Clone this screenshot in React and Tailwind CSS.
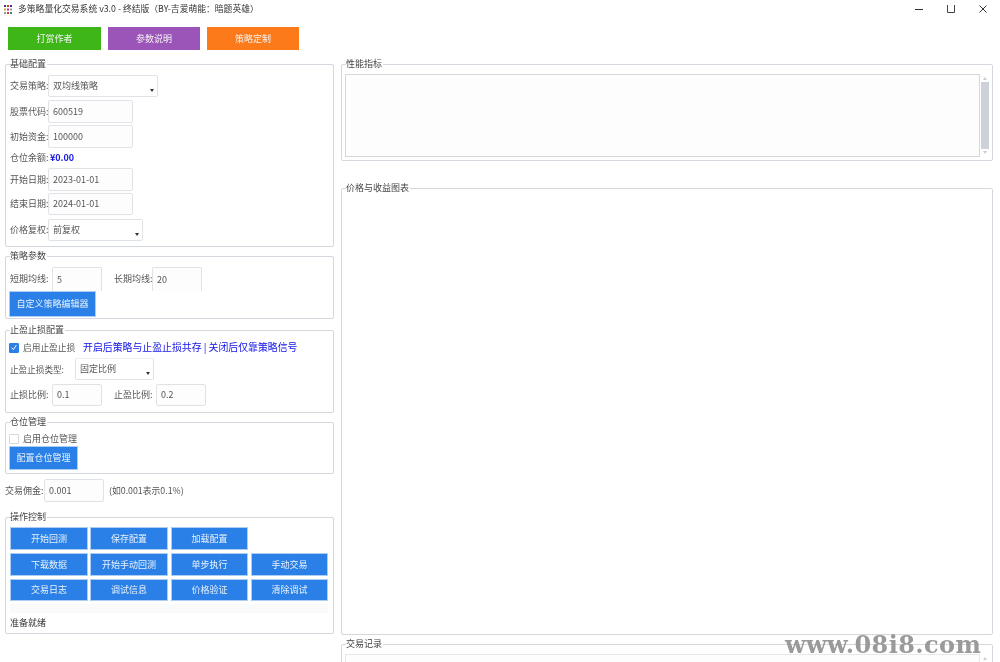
function Group({ title, className = "", children }) {
  return (
    <section className={`relative rounded-[2px] border border-[#d3d7de] ${className}`}>
      <span className="absolute left-[4px] top-[-7px] bg-white pr-[1px] text-[9px] leading-[12px] text-[#444]">{title}</span>
      {children}
    </section>
  );
}
function Field({ label, children, className = "" }) {
  return (
    <div className={`flex items-center ${className}`}>
      <span className="w-[38px] shrink-0 whitespace-nowrap text-[9px] text-[#555]">{label}</span>
      {children}
    </div>
  );
}
function Input({ value, className = "" }) {
  return (
    <div className={`flex items-center rounded-[2px] border border-[#dfe2e7] bg-[#fdfdfd] pl-[4px] text-[9px] text-[#555] ${className}`}>{value}</div>
  );
}
function Select({ value, className = "" }) {
  return (
    <div className={`relative flex items-center rounded-[2px] border border-[#dfe2e7] bg-white pl-[4px] text-[9px] text-[#555] ${className}`}>
      {value}
      <span className="absolute bottom-[4px] right-[3px] h-0 w-0 border-x-[2.5px] border-t-[3px] border-x-transparent border-t-[#333]" />
    </div>
  );
}
function Blue({ children, className = "" }) {
  return (
    <button className={`flex items-center justify-center border border-[#a9cdf3] bg-[#2a80e6] text-[9px] text-[#e8f1fc] ${className}`}>{children}</button>
  );
}
function Top({ children, className = "" }) {
  return (
    <button className={`flex h-[23px] items-center justify-center text-[9px] text-[#f3f3f3] ${className}`}>{children}</button>
  );
}
function Check({ on }) {
  return (
    <span className={`flex h-[10px] w-[10px] shrink-0 items-center justify-center rounded-[1px] border ${on ? "border-[#2a80e6] bg-[#2a80e6]" : "border-[#d5d8dc] bg-white"}`}>
      {on && (
        <svg viewBox="0 0 10 10" className="h-[9px] w-[9px]"><path d="M2 5.2 L4.2 7.6 L8 2" fill="none" stroke="#fff" strokeWidth="1.2" /></svg>
      )}
    </span>
  );
}
function Scrollbar({ className = "" }) {
  return (
    <div className={`flex w-[8px] shrink-0 flex-col items-center ${className}`}>
      <span className="mt-[3px] h-0 w-0 border-x-[2px] border-b-[3px] border-x-transparent border-b-[#ccc]" />
      <div className="mt-[2px] w-full flex-1 bg-[#cdd2da]" />
      <span className="mb-[3px] mt-[2px] h-0 w-0 border-x-[2px] border-t-[3px] border-x-transparent border-t-[#ccc]" />
    </div>
  );
}
export default function App() {
  return (
    <div className="relative h-[662px] w-[1000px] overflow-hidden bg-white text-[#444] blur-[0.35px] [font-family:'Noto_Sans_CJK_SC','Noto_Sans',sans-serif]">
      <header className="flex h-[18px] items-center">
        <svg viewBox="0 0 8 9" className="ml-[4px] h-[9px] w-[8px]">
          <rect x="0" y="0" width="2" height="2" fill="#3a3a8a" /><rect x="3" y="0" width="2" height="2" fill="#d33" />
          <rect x="6" y="0" width="2" height="2" fill="#3a3a8a" /><rect x="0" y="3.5" width="2" height="2" fill="#e8a020" />
          <rect x="3" y="3.5" width="2" height="2" fill="#b030b0" /><rect x="6" y="3.5" width="2" height="2" fill="#999" />
          <rect x="0" y="7" width="2" height="2" fill="#999" /><rect x="3" y="7" width="2" height="2" fill="#d33" />
          <rect x="6" y="7" width="2" height="2" fill="#3a8a6a" />
        </svg>
        <span className="ml-[6px] whitespace-nowrap text-[8.8px] text-[#333]">多策略量化交易系统 v3.0 - 终结版（BY-吉爱萌能：暗题英雄）</span>
        <div className="ml-auto mr-[13px] flex items-center gap-[24px]">
          <svg viewBox="0 0 8 8" className="h-[8px] w-[8px]"><path d="M0 4.5H8" stroke="#333" strokeWidth="1" /></svg>
          <svg viewBox="0 0 8 8" className="h-[8px] w-[8px]"><path d="M.5 0V7.5H7.5V0" fill="none" stroke="#444" strokeWidth="1" /></svg>
          <svg viewBox="0 0 8 8" className="h-[8px] w-[8px]"><path d="M.5 .5L7.5 7.5M7.5 .5L.5 7.5" stroke="#333" strokeWidth="1" /></svg>
        </div>
      </header>

      <div className="ml-[8px] mt-[9px] flex gap-[7px]">
        <Top className="w-[93px] bg-[#3fb618]">打赏作者</Top>
        <Top className="w-[92px] bg-[#9b54b8]">参数说明</Top>
        <Top className="w-[92px] bg-[#fd7a1a]">策略定制</Top>
      </div>

      <div className="ml-[5px] mt-[14px] flex items-start gap-[7px]">
        <div className="w-[329px] shrink-0">
          <Group title="基础配置" className="h-[183px] pl-[4px] pt-[10px]">
            <Field label="交易策略:"><Select value="双均线策略" className="h-[22px] w-[110px]" /></Field>
            <Field label="股票代码:" className="mt-[3px]"><Input value="600519" className="h-[23px] w-[85px]" /></Field>
            <Field label="初始资金:" className="mt-[2px]"><Input value="100000" className="h-[23px] w-[85px]" /></Field>
            <Field label="仓位余额:" className="h-[20px]"><span className="pl-[2px] text-[9px] font-bold text-[#1212e6]">¥0.00</span></Field>
            <Field label="开始日期:"><Input value="2023-01-01" className="h-[23px] w-[85px]" /></Field>
            <Field label="结束日期:" className="mt-[2px]"><Input value="2024-01-01" className="h-[22px] w-[85px]" /></Field>
            <Field label="价格复权:" className="mt-[4px]"><Select value="前复权" className="h-[22px] w-[95px]" /></Field>
          </Group>

          <Group title="策略参数" className="mt-[9px] h-[63px] pl-[4px] pt-[10px]">
            <div className="flex h-[24px] items-center">
              <span className="w-[42px] shrink-0 whitespace-nowrap text-[9px] text-[#555]">短期均线:</span>
              <Input value="5" className="h-full w-[50px] rounded-b-none border-b-0" />
              <span className="ml-[12px] w-[38px] shrink-0 whitespace-nowrap text-[9px] text-[#555]">长期均线:</span>
              <Input value="20" className="h-full w-[50px] rounded-b-none border-b-0" />
            </div>
            <Blue className="h-[26px] w-[87px] -translate-x-[1px]">自定义策略编辑器</Blue>
          </Group>

          <Group title="止盈止损配置" className="mt-[11px] h-[83px] pl-[3px] pt-[11px]">
            <div className="flex h-[11px] items-center">
              <Check on />
              <span className="ml-[4px] w-[60px] whitespace-nowrap text-[8.7px] text-[#555]">启用止盈止损</span>
              <span className="whitespace-nowrap text-[9.9px] text-[#1212e6]">开启后策略与止盈止损共存 | 关闭后仅靠策略信号</span>
            </div>
            <div className="mt-[5px] flex h-[22px] items-center pl-[1px]">
              <span className="w-[65px] shrink-0 whitespace-nowrap text-[8.6px] text-[#555]">止盈止损类型:</span>
              <Select value="固定比例" className="h-full w-[79px] border-t-[#eee]" />
            </div>
            <div className="mt-[4px] flex h-[22px] items-center pl-[1px]">
              <span className="w-[42px] shrink-0 whitespace-nowrap text-[9px] text-[#555]">止损比例:</span>
              <Input value="0.1" className="h-full w-[50px]" />
              <span className="ml-[12px] w-[42px] shrink-0 whitespace-nowrap text-[9px] text-[#555]">止盈比例:</span>
              <Input value="0.2" className="h-full w-[50px]" />
            </div>
          </Group>

          <Group title="仓位管理" className="mt-[9px] h-[52px] pl-[3px] pt-[10px]">
            <div className="flex h-[11px] items-center">
              <Check />
              <span className="ml-[4px] text-[9px] text-[#555]">启用仓位管理</span>
            </div>
            <Blue className="mt-[2px] h-[24px] w-[69px]">配置仓位管理</Blue>
          </Group>

          <div className="mt-[5px] flex h-[23px] items-center">
            <span className="w-[39px] shrink-0 whitespace-nowrap text-[9px] text-[#555]">交易佣金:</span>
            <Input value="0.001" className="h-full w-[60px]" />
            <span className="ml-[5px] text-[8.8px] text-[#555]">(如0.001表示0.1%)</span>
          </div>

          <Group title="操作控制" className="mt-[15px] h-[117px] pl-[4px] pt-[9px]">
            <div className="grid grid-cols-[78px_79px_78px_77px] grid-rows-[23px_23px_22px] gap-x-[2px] gap-y-[3px]">
              <Blue>开始回测</Blue>
              <Blue className="w-[78px]">保存配置</Blue>
              <Blue className="w-[77px]">加载配置</Blue>
              <span />
              <Blue>下载数据</Blue>
              <Blue className="w-[78px]">开始手动回测</Blue>
              <Blue className="w-[77px]">单步执行</Blue>
              <Blue>手动交易</Blue>
              <Blue>交易日志</Blue>
              <Blue className="w-[78px]">调试信息</Blue>
              <Blue className="w-[77px]">价格验证</Blue>
              <Blue>清除调试</Blue>
            </div>
            <div className="mt-[3px] h-[9px] w-[318px] bg-[#fafafa]" />
            <div className="mt-[3px] text-[9px] leading-[14px] text-[#333]">准备就绪</div>
          </Group>
        </div>

        <div className="w-[652px] shrink-0">
          <Group title="性能指标" className="flex h-[97px] pb-[3px] pl-[3px] pt-[9px]">
            <div className="h-full w-[635px] border border-[#d3d7de] bg-[#fdfdfd]" />
            <Scrollbar className="ml-[1px] h-full" />
          </Group>
          <Group title="价格与收益图表" className="mt-[27px] h-[447px]" />
          <Group title="交易记录" className="mt-[9px] flex h-[60px] pl-[3px] pt-[9px]">
            <div className="h-full w-[635px] border border-[#e5e7eb] bg-[#fdfdfd]" />
            <Scrollbar className="ml-[1px] h-full" />
          </Group>
        </div>
      </div>

      <div className="absolute left-[785px] top-[629px] text-[24px] font-bold leading-[32px] tracking-[0.4px] text-[#9a9a9a] [font-family:'DejaVu_Serif',serif]">www.08i8.com</div>
    </div>
  );
}
